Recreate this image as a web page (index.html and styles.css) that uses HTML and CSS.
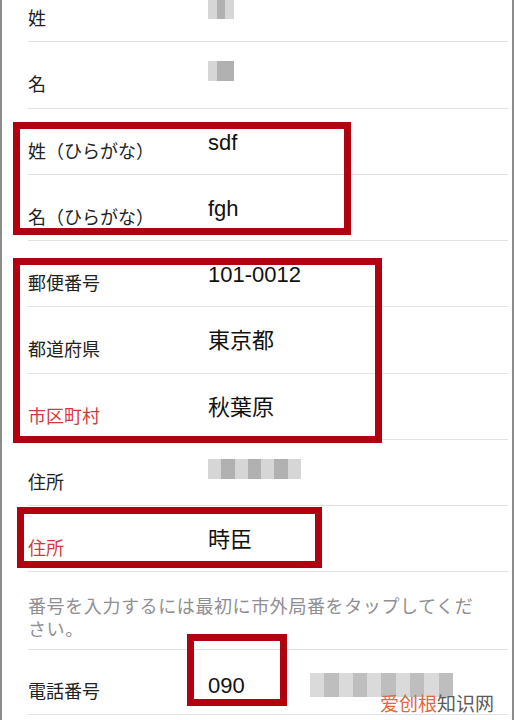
FILE: index.html
```html
<!DOCTYPE html>
<html lang="ja">
<head>
<meta charset="utf-8">
<link rel="stylesheet" href="styles.css">
</head>
<body>
<div class="page">
  <div class="list">
    <div class="row"><span class="label">姓</span><span class="value"><span class="blur blur-s"><i></i><i class="d"></i><i></i></span></span></div>
    <div class="row"><span class="label">名</span><span class="value"><span class="blur blur-s b2"><i></i><i class="d"></i><i class="d"></i></span></span></div>
    <div class="row"><span class="label">姓（ひらがな）</span><span class="value">sdf</span></div>
    <div class="row"><span class="label">名（ひらがな）</span><span class="value">fgh</span></div>
    <div class="row"><span class="label">郵便番号</span><span class="value">101-0012</span></div>
    <div class="row"><span class="label">都道府県</span><span class="value">東京都</span></div>
    <div class="row"><span class="label red">市区町村</span><span class="value">秋葉原</span></div>
    <div class="row"><span class="label">住所</span><span class="value"><span class="blur blur-m"><i></i><i class="d"></i><i></i><i class="d"></i><i></i><i class="d"></i><i></i></span></span></div>
    <div class="row"><span class="label red">住所</span><span class="value">時臣</span></div>
    <div class="note">番号を入力するには最初に市外局番をタップしてください。</div>
    <div class="row phone"><span class="label">電話番号</span><span class="value">090</span><span class="blur blur-l"><i></i><i class="d"></i><i></i><i class="d"></i><i></i><i class="d"></i><i></i><i class="d"></i><i></i><i class="d"></i></span></div>
  </div>
  <div class="mark m1"></div>
  <div class="mark m2"></div>
  <div class="mark m3"></div>
  <div class="mark m4"></div>
  <div class="watermark"><span class="wm-a">爱创根</span><span class="wm-b">知识网</span></div>
</div>
</body>
</html>
```
FILE: styles.css
```css
html, body {
  margin: 0;
  padding: 0;
  background: #ffffff;
}
body {
  width: 514px;
  height: 720px;
  overflow: hidden;
}
.page {
  position: relative;
  width: 514px;
  height: 720px;
  box-sizing: border-box;
  border-left: 2px solid #8c8c8c;
  border-right: 2px solid #8c8c8c;
  overflow: hidden;
  font-family: "Noto Sans CJK JP", "Noto Sans", sans-serif;
  color: #222222;
}
.list {
  display: flex;
  flex-direction: column;
  margin-top: -24px;
  margin-left: 26px;
  margin-right: 4px;
}
.row {
  position: relative;
  display: grid;
  grid-template-columns: 180px 1fr;
  height: 66.25px;
  box-sizing: border-box;
  border-bottom: 1px solid #e2e4e4;
}
.label {
  font-size: 18px;
  line-height: 22px;
  padding-top: 30px;
  white-space: nowrap;
}
.label.red {
  color: #d23a40;
}
.value {
  font-family: "Liberation Sans", "Noto Sans CJK JP", sans-serif;
  font-size: 22px;
  line-height: 26px;
  padding-top: 21px;
  color: #111111;
}
.blur {
  display: flex;
  height: 20px;
  opacity: 0.9;
}
.blur i {
  flex: 1;
  background: #d2d2d2;
}
.blur i.d {
  background: #a9a9a9;
}
.blur-s {
  width: 26px;
  margin-top: 2px;
}
.blur-s.b2 {
  margin-top: -2px;
}
.blur-m {
  width: 93px;
  margin-top: -2px;
}
.blur-l {
  position: absolute;
  left: 282px;
  top: 23px;
  width: 143px;
  height: 24px;
  background: #e0e0e0;
}
.blur-l i {
  background: #d6d6d6;
}
.blur-l i.d {
  background: #b8b8b8;
}
.note {
  font-size: 18px;
  line-height: 23px;
  color: #8e8e93;
  padding-top: 22px;
  padding-right: 22px;
  height: 78px;
  box-sizing: border-box;
  letter-spacing: 0.6px;
  border-bottom: 1px solid #e2e4e4;
}
.row.phone {
  height: 65px;
}
.row.phone .label {
  padding-top: 29px;
}
.row.phone .value {
  padding-top: 23px;
}
.mark {
  position: absolute;
  box-sizing: border-box;
  border: 7px solid #b1030f;
}
.m1 { left: 11px; top: 122px; width: 338px; height: 113px; }
.m2 { left: 11px; top: 258px; width: 369px; height: 185px; }
.m3 { left: 15px; top: 507px; width: 305px; height: 61px; }
.m4 { left: 185px; top: 634px; width: 100px; height: 72px; }
.watermark {
  position: absolute;
  left: 378px;
  top: 690px;
  font-family: "Noto Sans CJK SC", sans-serif;
  font-size: 19px;
  line-height: 26px;
  white-space: nowrap;
}
.wm-a { color: #e2673f; }
.wm-b { color: #5a5a5a; }
```
